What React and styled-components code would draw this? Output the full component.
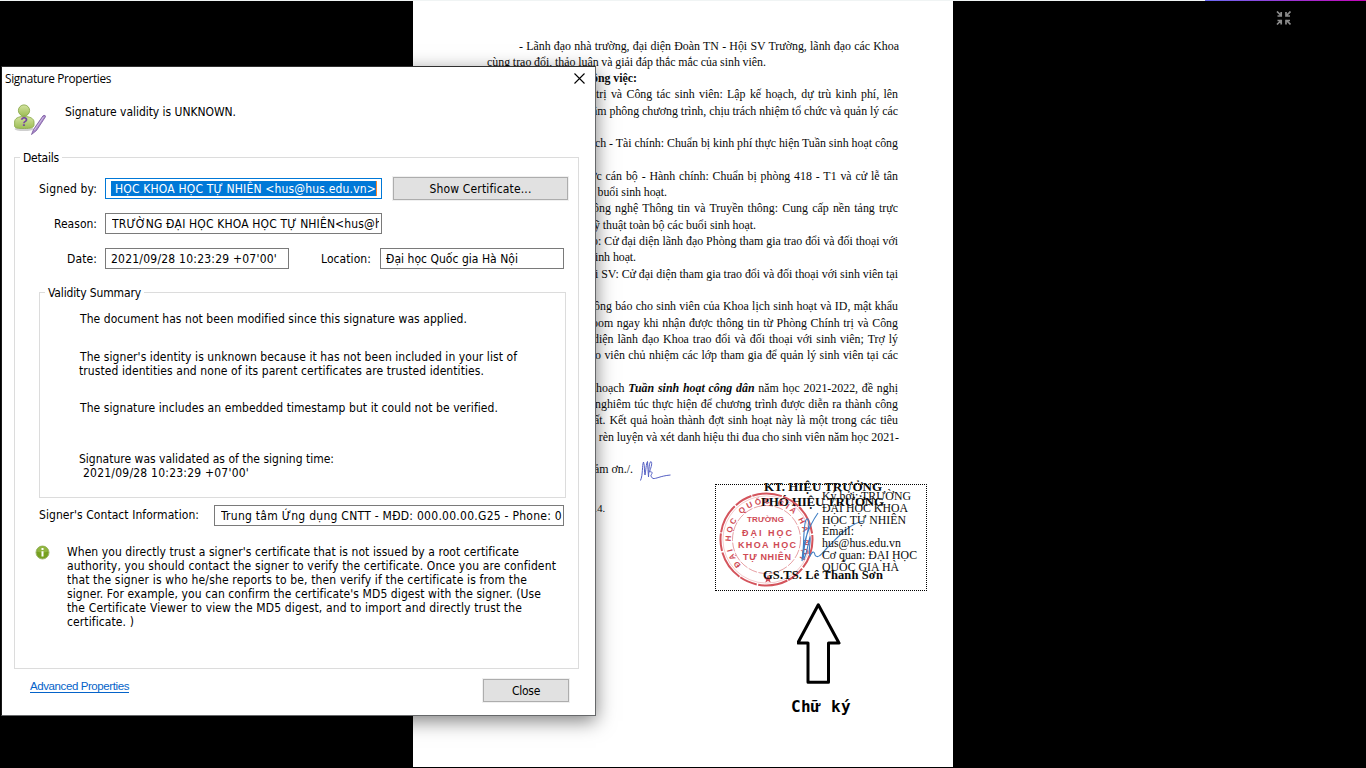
import React, { useLayoutEffect, useRef } from "react";
import styled, { createGlobalStyle } from "styled-components";

const UI = '"DejaVu Sans Condensed", "DejaVu Sans", sans-serif';
const SERIF = '"Liberation Serif", serif';

const GlobalStyle = createGlobalStyle`
  * { box-sizing: border-box; }
  body { margin: 0; background: #000; overflow: hidden; }
`;

const Desktop = styled.div`
  position: relative;
  width: 1366px;
  height: 768px;
  background: #000;
  overflow: hidden;
`;

const TopStrip = styled.div`
  height: 1px;
  background: linear-gradient(90deg, #f0f4f4 0 1205px, #6b6bf2 1205px, #c404b8 1366px);
`;

/* ---------- text that is spaced to a given width ---------- */

const Run = styled.span`
  display: inline-block;
  white-space: pre;
  flex: none;
`;

function Fit({ w, by = "letter", children, ...rest }) {
  const ref = useRef(null);
  useLayoutEffect(() => {
    const el = ref.current;
    el.style.letterSpacing = "0px";
    el.style.wordSpacing = "0px";
    const text = el.textContent;
    const gaps = by === "word" ? text.split(" ").length - 1 : text.length;
    if (!gaps) return;
    const step = (w - el.getBoundingClientRect().width) / gaps;
    el.style[by === "word" ? "wordSpacing" : "letterSpacing"] = `${step}px`;
  }, [w, by, children]);
  return <Run ref={ref} {...rest}>{children}</Run>;
}

/* ---------- document ---------- */

const Sheet = styled.main`
  width: 540px;
  height: 766px;
  margin-left: 413px;
  background: #fff;
  color: #0a0a0a;
  font-family: ${SERIF};
  font-size: 11.9px;
  display: flex;
  flex-direction: column;
`;

const Body = styled.div`
  height: 476px;
  flex: none;
  padding-top: 36.52px;
`;

const Line = styled.div`
  height: 16.31px;
  line-height: 16.31px;
  display: flex;
  padding-left: ${(p) => p.$x - 413}px;
  font-weight: ${(p) => (p.$bold ? 700 : 400)};
`;

const Scribble = styled.svg`
  flex: none;
  margin: -1px 0 0 7px;
  overflow: visible;
`;

const SignArea = styled.div`
  display: flex;
  margin-top: 7px;
  padding-left: 179px;
`;

const PageMark = styled.div`
  width: 123px;
  padding-top: 18px;
  font-size: 10.5px;
  line-height: 13px;
`;

const SignBox = styled.div`
  position: relative;
  width: 212px;
  height: 107px;
  border: 1px dotted #000;
`;

const Overlay = styled.div`
  position: absolute;
  left: ${(p) => p.$x}px;
  top: ${(p) => p.$y}px;
  font-size: ${(p) => p.$size || 13}px;
  font-weight: ${(p) => (p.$bold ? 700 : 400)};
  line-height: ${(p) => p.$lh || 15}px;
  display: flex;
  flex-direction: column;
  align-items: flex-start;
`;

const Stamp = styled.svg`
  position: absolute;
  left: 0;
  top: 0;
  overflow: visible;
`;

const Callout = styled.div`
  width: 60px;
  margin: 12px 0 0 378px;
  display: flex;
  flex-direction: column;
  align-items: center;
`;

const CalloutLabel = styled.div`
  margin-top: 11px;
  font: 700 16px/22px "DejaVu Sans Mono", monospace;
  color: #000;
`;

const lines = [
  { x: 519, w: 380, t: "- Lãnh đạo nhà trường, đại diện Đoàn TN - Hội SV Trường, lãnh đạo các Khoa" },
  { x: 487, w: 279, t: "cùng trao đổi, thảo luận và giải đáp thắc mắc của sinh viên." },
  { x: 592, w: 45, t: "ông việc:", bold: true, by: "letter" },
  { x: 596, w: 302, t: "trị và Công tác sinh viên: Lập kế hoạch, dự trù kinh phí, lên" },
  { x: 592, w: 306, t: "ầm phông chương trình, chịu trách nhiệm tổ chức và quản lý các" },
  null,
  { x: 595, w: 303, t: "ch - Tài chính: Chuẩn bị kinh phí thực hiện Tuần sinh hoạt công" },
  null,
  { x: 590, w: 308, t: "ức cán bộ - Hành chính: Chuẩn bị phòng 418 - T1 và cử lễ tân" },
  { x: 597.5, w: 69.5, t: "buổi sinh hoạt.", by: "letter" },
  { x: 593, w: 305, t: "ông nghệ Thông tin và Truyền thông: Cung cấp nền tảng trực" },
  { x: 594, w: 162, t: "ỹ thuật toàn bộ các buổi sinh hoạt." },
  { x: 592, w: 306, t: "o: Cử đại diện lãnh đạo Phòng tham gia trao đổi và đối thoại với" },
  { x: 595, w: 41, t: "inh hoạt.", by: "letter" },
  { x: 595, w: 303, t: "i SV: Cử đại diện tham gia trao đổi và đối thoại với sinh viên tại" },
  null,
  { x: 594, w: 304, t: "ông báo cho sinh viên của Khoa lịch sinh hoạt và ID, mật khẩu" },
  { x: 592, w: 306, t: "oom ngay khi nhận được thông tin từ Phòng Chính trị và Công" },
  { x: 593, w: 305, t: "diện lãnh đạo Khoa trao đổi và đối thoại với sinh viên; Trợ lý" },
  { x: 595, w: 303, t: "o viên chủ nhiệm các lớp tham gia để quản lý sinh viên tại các" },
  null,
  { x: 596, w: 302, t: <>hoạch <b><i>Tuần sinh hoạt công dân</i></b> năm học 2021-2022, đề nghị</> },
  { x: 595, w: 303, t: "nghiêm túc thực hiện để chương trình được diễn ra thành công" },
  { x: 594, w: 304, t: "ất. Kết quả hoàn thành đợt sinh hoạt này là một trong các tiêu" },
  { x: 590, w: 309, t: "n rèn luyện và xét danh hiệu thi đua cho sinh viên năm học 2021-" },
  null,
  { x: 594, w: 39, t: "ảm ơn./.", scribble: true, by: "letter" },
];

const signer = [
  [89, "Ký bởi: TRƯỜNG"],
  [86, "ĐẠI HỌC KHOA"],
  [84, "HỌC TỰ NHIÊN"],
  [32, "Email:"],
  [79, "hus@hus.edu.vn"],
  [95, "Cơ quan: ĐẠI HỌC"],
  [77, "QUỐC GIA HÀ"],
];

function SignatureStamp() {
  return (
    <Stamp width="210" height="105" viewBox="0 0 210 105" fill="none">
      <defs>
        <path id="arcTop" d="M25 80A36.500 36.500 0 1 1 79 79" />
      </defs>
      <g stroke="#d4545c">
        <circle cx="50.500" cy="54.500" r="46" strokeWidth="2" strokeDasharray="30 1.5 18 1" />
        <circle cx="50.500" cy="54.500" r="43.600" strokeWidth=".6" opacity=".5" />
        <circle cx="50.500" cy="54.500" r="34" strokeWidth=".7" strokeDasharray="9 1.5" opacity=".8" />
      </g>
      <g fill="#cf4a54" fontFamily="Liberation Sans, sans-serif" fontWeight="700">
        <text fontSize="8" letterSpacing="2.45">
          <textPath href="#arcTop">ĐẠI HỌC QUỐC GIA HÀ NỘI</textPath>
        </text>
        <text x="31" y="37" fontSize="8" textLength="37">TRƯỜNG</text>
        <text x="26" y="50.500" fontSize="9" textLength="50">ĐẠI HỌC</text>
        <text x="22" y="63.300" fontSize="9" textLength="58">KHOA HỌC</text>
        <text x="27" y="75.300" fontSize="9" textLength="48">TỰ NHIÊN</text>
        <path d="M52 90l1.200 2.800h3l-2.400 1.900.9 2.900-2.700-1.700-2.700 1.700.9-2.900-2.400-1.900h3z" />
      </g>
      <path
        d="M102 28C95 38 87 52 86 76C88 70 87 40 90 35C92 31 94 37 92 45C89 57 87 70 88 74C91 68 93 54 94 52C95 56 92 66 94 71C96 67 98 65 99 70C102 75 107 67 111 63C122 52 134 38 148 36"
        stroke="#3f7fc4" strokeWidth="1.1"
      />
    </Stamp>
  );
}

/* ---------- dialog ---------- */

const Dialog = styled.section`
  position: absolute;
  left: 1px;
  top: 66px;
  width: 595px;
  height: 650px;
  padding: 1px 0 0 1px;
  border: 1px solid;
  border-color: #303030 #66686a #66686a #181818;
  background: #fff;
  box-shadow: 0 5px 18px rgba(0, 0, 0, 0.5);
  font-family: ${UI};
  font-size: 12px;
  line-height: 14px;
  color: #000;
`;

const TitleBar = styled.header`
  height: 22px;
  padding: 0 10px 1px 2px;
  display: flex;
  align-items: center;
  justify-content: space-between;
  font-family: "Open Sans", "Noto Sans", sans-serif;
  font-size: 11.8px;
`;

const Title = styled.h1`
  margin: 0 0 2px;
  font: inherit;
  display: flex;
`;

const StatusRow = styled.div`
  height: 59px;
  padding: 14px 0 0 11px;
  display: flex;
  align-items: flex-start;
  gap: 19px;
  line-height: 16px;
`;

const Group = styled.fieldset`
  width: ${(p) => p.$w}px;
  height: ${(p) => p.$h}px;
  margin: ${(p) => p.$m};
  padding: 0;
  border: 1px solid #dcdcdc;
`;

const Legend = styled.legend`
  height: 16px;
  line-height: 17px;
  margin-left: ${(p) => p.$ml}px;
  padding: 1px 3px 0;
  display: flex;
`;

const Row = styled.div`
  display: flex;
  align-items: center;
  height: ${(p) => p.$h || 21}px;
  margin: ${(p) => p.$mt}px 0 0 ${(p) => p.$ml || 0}px;
`;

const Label = styled.div`
  width: ${(p) => p.$w || 82}px;
  margin-right: ${(p) => p.$gap || 8}px;
  padding-bottom: ${(p) => p.$lift || 0}px;
  display: flex;
  justify-content: flex-end;
`;

const Field = styled.div`
  width: ${(p) => p.$w}px;
  height: 21px;
  border: 1px solid ${(p) => (p.$focus ? "#0078d7" : "#7a7a7a")};
  padding: 2px ${(p) => p.$pr ?? 2}px 2px ${(p) => p.$pl ?? 5}px;
  display: flex;
`;

const Clip = styled.div`
  flex: 1;
  min-width: 0;
  height: ${(p) => (p.$selected ? 15 : 16)}px;
  line-height: ${(p) => (p.$selected ? 16 : 17)}px;
  display: flex;
  justify-content: ${(p) => (p.$selected ? "flex-end" : "flex-start")};
  overflow: hidden;
  background: ${(p) => (p.$selected ? "#0078d7" : "transparent")};
  color: ${(p) => (p.$selected ? "#fff" : "#000")};
  border-right: ${(p) => (p.$selected ? "1px solid #ff8728" : "0")};
`;

const Button = styled.button`
  width: ${(p) => p.$w}px;
  height: 23px;
  margin-left: ${(p) => p.$ml || 0}px;
  padding: 0;
  border: 1px solid #adadad;
  outline: 1px solid #f0f0f0;
  background: #e1e1e1;
  color: #000;
  font: inherit;
`;

const Summary = styled.div`
  padding: 12px 0 0 39px;
`;

const Para = styled.div`
  margin-top: ${(p) => p.$mt || 0}px;
  display: flex;
  flex-direction: column;
  align-items: flex-start;
`;

const Indent = styled.div`
  padding-left: ${(p) => p.$by}px;
  display: flex;
`;

const Advice = styled.div`
  display: flex;
  align-items: flex-start;
  gap: 17px;
  margin: 19px 0 0 20px;
`;

const Footer = styled.footer`
  display: flex;
  align-items: center;
  justify-content: space-between;
  padding: 10px 26px 0 27px;
`;

const Link = styled.a`
  font: 11.5px/13px "Liberation Sans", sans-serif;
  height: 13px;
  margin-bottom: 8px;
  display: flex;
  color: #0563c9;
  border-bottom: 1px solid #0563c9;
`;

const FullscreenIcon = styled.svg`
  position: absolute;
  left: 1276px;
  top: 11px;
`;

const validity = [
  [0, [[387, 1, "The document has not been modified since this signature was applied."]]],
  [24, [
    [437, 1, "The signer's identity is unknown because it has not been included in your list of"],
    [405, 0, "trusted identities and none of its parent certificates are trusted identities."],
  ]],
  [23, [[418, 1, "The signature includes an embedded timestamp but it could not be verified."]]],
  [37, [
    [255, 0, "Signature was validated as of the signing time:"],
    [166, 4, "2021/09/28 10:23:29 +07'00'"],
  ]],
];

const advice = [
  [452, "When you directly trust a signer's certificate that is not issued by a root certificate"],
  [489, "authority, you should contact the signer to verify the certificate. Once you are confident"],
  [460, "that the signer is who he/she reports to be, then verify if the certificate is from the"],
  [474, "signer. For example, you can confirm the certificate's MD5 digest with the signer. (Use"],
  [455, "the Certificate Viewer to view the MD5 digest, and to import and directly trust the"],
  [67, "certificate. )"],
];

function SignerIcon() {
  return (
    <svg width="32" height="32" viewBox="0 0 32 32">
      <defs>
        <linearGradient id="body" x1="0" y1="0" x2="0" y2="1">
          <stop offset="0" stopColor="#d3e39f" />
          <stop offset="1" stopColor="#9dbd55" />
        </linearGradient>
      </defs>
      <ellipse cx="10" cy="25" rx="9.5" ry="2" fill="#cfcfcf" />
      <path d="M.6 22V18C.6 14.500 4 12.500 10 12.500S20 14.500 20 18V21C20 23.500 17 24.500 10.300 24.500S.6 24 .6 22Z" fill="url(#body)" stroke="#8fae50" strokeWidth=".9" />
      <circle cx="10" cy="6.500" r="5.600" fill="url(#body)" stroke="#8aa94a" strokeWidth=".9" />
      <text x="6.200" y="22.300" fontFamily="Liberation Sans, sans-serif" fontSize="12.500" fontWeight="700" fill="#7246a0">?</text>
      <path d="M17.500 30.500L19.500 25.500L29 11.800Q31.500 10.500 31.600 12.600L22.500 26.500Z" fill="#a98acb" stroke="#76569c" strokeWidth=".8" />
      <path d="M20.500 26L29.500 13" stroke="#d9c8ea" strokeWidth=".9" />
    </svg>
  );
}

function InfoIcon() {
  return (
    <svg width="15" height="15" viewBox="0 0 15 15">
      <circle cx="7.500" cy="7.500" r="6.500" fill="#76a01f" stroke="#9db66e" strokeWidth="1" />
      <path d="M2 6.500A5.500 5.500 0 0 1 13 6.500Q7.500 8.500 2 6.500Z" fill="#90b440" />
      <path d="M7.500 3v2M7.500 6.200v5.300" stroke="#fff" strokeWidth="2" />
    </svg>
  );
}

export default function App() {
  return (
    <Desktop>
      <GlobalStyle />
      <TopStrip />
      <Sheet>
        <Body>
          {lines.map((l, i) =>
            l ? (
              <Line key={i} $x={l.x} $bold={l.bold}>
                <Fit w={l.w} by={l.by || "word"}>{l.t}</Fit>
                {l.scribble && (
                  <Scribble width="32" height="22" viewBox="0 0 32 22" fill="none" stroke="#5560c4" strokeWidth="1">
                    <path d="M.5 20.500C3 15 2 5 3.500 2C5 6 4 12 5 15C6 10 6 4 7.500 1.500C8 7 8 12 8.500 17C9 10 9 2 11 1.500C13 3 10 10 9.500 12C12 11 13 13 11 15C10.500 16 12 18 13 18.500C16 19 20 16 30.500 15" />
                  </Scribble>
                )}
              </Line>
            ) : (
              <Line key={i} $x={596} />
            )
          )}
        </Body>
        <SignArea>
          <PageMark>14.</PageMark>
          <SignBox>
            <Overlay $x={48} $y={-6} $bold><Fit w={118}>KT. HIỆU TRƯỞNG</Fit></Overlay>
            <Overlay $x={45} $y={9} $bold><Fit w={123}>PHÓ HIỆU TRƯỞNG</Fit></Overlay>
            <SignatureStamp />
            <Overlay $x={106} $y={5.7} $size={11.8} $lh={11.9}>
              {signer.map(([w, t]) => <Fit key={t} w={w}>{t}</Fit>)}
            </Overlay>
            <Overlay $x={47} $y={83} $size={12.5} $bold><Fit w={120}>GS.TS. Lê Thanh Sơn</Fit></Overlay>
          </SignBox>
        </SignArea>
        <Callout>
          <svg width="48" height="82" viewBox="0 0 48 82" fill="none" stroke="#000" strokeWidth="3" strokeLinejoin="round">
            <path d="M21.300 1.800L42 40H31.500V79.200H11V40H.8Z" />
          </svg>
          <CalloutLabel><Fit w={60}>Chữ ký</Fit></CalloutLabel>
        </Callout>
      </Sheet>

      <FullscreenIcon width="15" height="15" viewBox="0 0 15 15" fill="none" stroke="#8c8c8c" strokeWidth="1.7">
        <path d="M1 .5L5.500 5M5.200 1V5H1.500M14.500 .5L10 5M10 1V5H14M1 13.500L5.500 9M5.200 13.500V9.500H1.500M14.500 13.500L10 9M10 13.500V9.500H14" />
      </FullscreenIcon>

      <Dialog>
        <TitleBar>
          <Title><Fit w={106}>Signature Properties</Fit></Title>
          <svg width="11" height="11" viewBox="0 0 11 11" stroke="#000" strokeWidth="1.100">
            <path d="M.5.5l10 10M10.500.5l-10 10" />
          </svg>
        </TitleBar>
        <StatusRow>
          <SignerIcon />
          <Fit w={171}>Signature validity is UNKNOWN.</Fit>
        </StatusRow>
        <Group $w={565} $h={520} $m="0 0 0 11px">
          <Legend $ml={5}><Fit w={36}>Details</Fit></Legend>
          <Row $mt={12} $h={23}>
            <Label><Fit w={58}>Signed by:</Fit></Label>
            <Field $w={277} $focus $pr={4}>
              <Clip $selected><Fit w={268}>I HỌC KHOA HỌC TỰ NHIÊN &lt;hus@hus.edu.vn&gt;</Fit></Clip>
            </Field>
            <Button $w={175} $ml={11}><Fit w={102}>Show Certificate...</Fit></Button>
          </Row>
          <Row $mt={13}>
            <Label><Fit w={43}>Reason:</Fit></Label>
            <Field $w={277} $pl={6}>
              <Clip><Fit w={270}>TRƯỜNG ĐẠI HỌC KHOA HỌC TỰ NHIÊN&lt;hus@h</Fit></Clip>
            </Field>
          </Row>
          <Row $mt={14}>
            <Label><Fit w={30}>Date:</Fit></Label>
            <Field $w={184}><Clip><Fit w={166}>2021/09/28 10:23:29 +07'00'</Fit></Clip></Field>
            <Label $gap={9}><Fit w={50}>Location:</Fit></Label>
            <Field $w={184}><Clip><Fit w={132}>Đại học Quốc gia Hà Nội</Fit></Clip></Field>
          </Row>
          <Group $w={527} $h={214} $m="15px 0 0 24px">
            <Legend $ml={5}><Fit w={93}>Validity Summary</Fit></Legend>
            <Summary>
              {validity.map(([mt, rows]) => (
                <Para key={rows[0][2]} $mt={mt}>
                  {rows.map(([w, indent, t]) => (
                    <Indent key={t} $by={indent}><Fit w={w}>{t}</Fit></Indent>
                  ))}
                </Para>
              ))}
            </Summary>
          </Group>
          <Row $mt={7} $ml={24}>
            <Label $w={160} $gap={15} $lift={2}><Fit w={160}>Signer's Contact Information:</Fit></Label>
            <Field $w={350} $pl={6} $pr={1}>
              <Clip><Fit w={341}>Trung tâm Ứng dụng CNTT - MĐD: 000.00.00.G25 - Phone: 0</Fit></Clip>
            </Field>
          </Row>
          <Advice>
            <InfoIcon />
            <Para>{advice.map(([w, t]) => <Fit key={t} w={w}>{t}</Fit>)}</Para>
          </Advice>
        </Group>
        <Footer>
          <Link><Fit w={99}>Advanced Properties</Fit></Link>
          <Button $w={86}><Fit w={28}>Close</Fit></Button>
        </Footer>
      </Dialog>
    </Desktop>
  );
}
